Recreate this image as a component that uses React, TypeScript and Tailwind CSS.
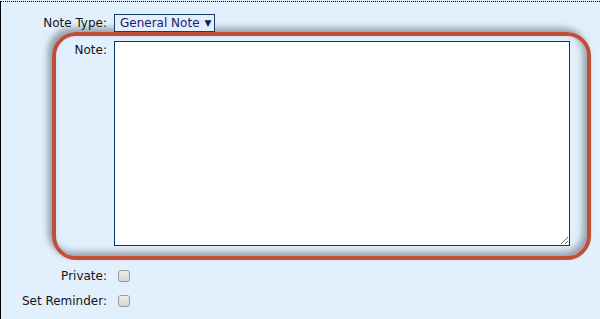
import React from "react";

function Check() {
  return (
    <div className="ml-[11px] h-[12px] w-[12px] rounded-[3px] border border-[#9a9a9a] bg-gradient-to-b from-[#eeeeee] to-[#d6d6d6]" />
  );
}

export default function App() {
  return (
    <div className="h-[319px] w-[600px] overflow-hidden bg-[#e2f0fd] font-['DejaVu_Sans',Verdana,sans-serif] text-[12px] leading-[14px] text-[#141414]">
      <div className="mt-px h-full border-l border-black">
        <div className="border-t border-dotted border-black" />
        <div className="pt-[12px]">
          <div className="flex items-center">
            <div className="w-[106px] text-right">Note Type:</div>
            <div className="relative z-10 ml-[7px] flex h-[18px] w-[101px] items-center border border-[#1a3a6e] bg-[#e2f0fd] pl-[5px] text-[#24166e]">
              <span>General Note</span>
              <span className="ml-[5px] text-[9px] leading-none text-[#13235a]">▼</span>
            </div>
          </div>
          <div className="ml-[51px] flex h-[228px] w-[539px] rounded-[24px] border-4 border-[#c14f38] pt-[5px] shadow-[-4px_-4px_6px_rgba(95,105,115,0.6),inset_-4px_-4px_7px_rgba(95,105,115,0.6)]">
            <div className="w-[51px] pt-[2px] text-right">Note:</div>
            <textarea className="ml-[7px] h-[205px] w-[456px] border border-[#0b3270] bg-white outline-none" />
          </div>
          <div className="mt-[3px]">
            <div className="flex h-[25px] items-center">
              <div className="w-[106px] text-right">Private:</div>
              <Check />
            </div>
            <div className="flex h-[25px] items-center">
              <div className="w-[106px] text-right">Set Reminder:</div>
              <Check />
            </div>
          </div>
        </div>
      </div>
    </div>
  );
}
